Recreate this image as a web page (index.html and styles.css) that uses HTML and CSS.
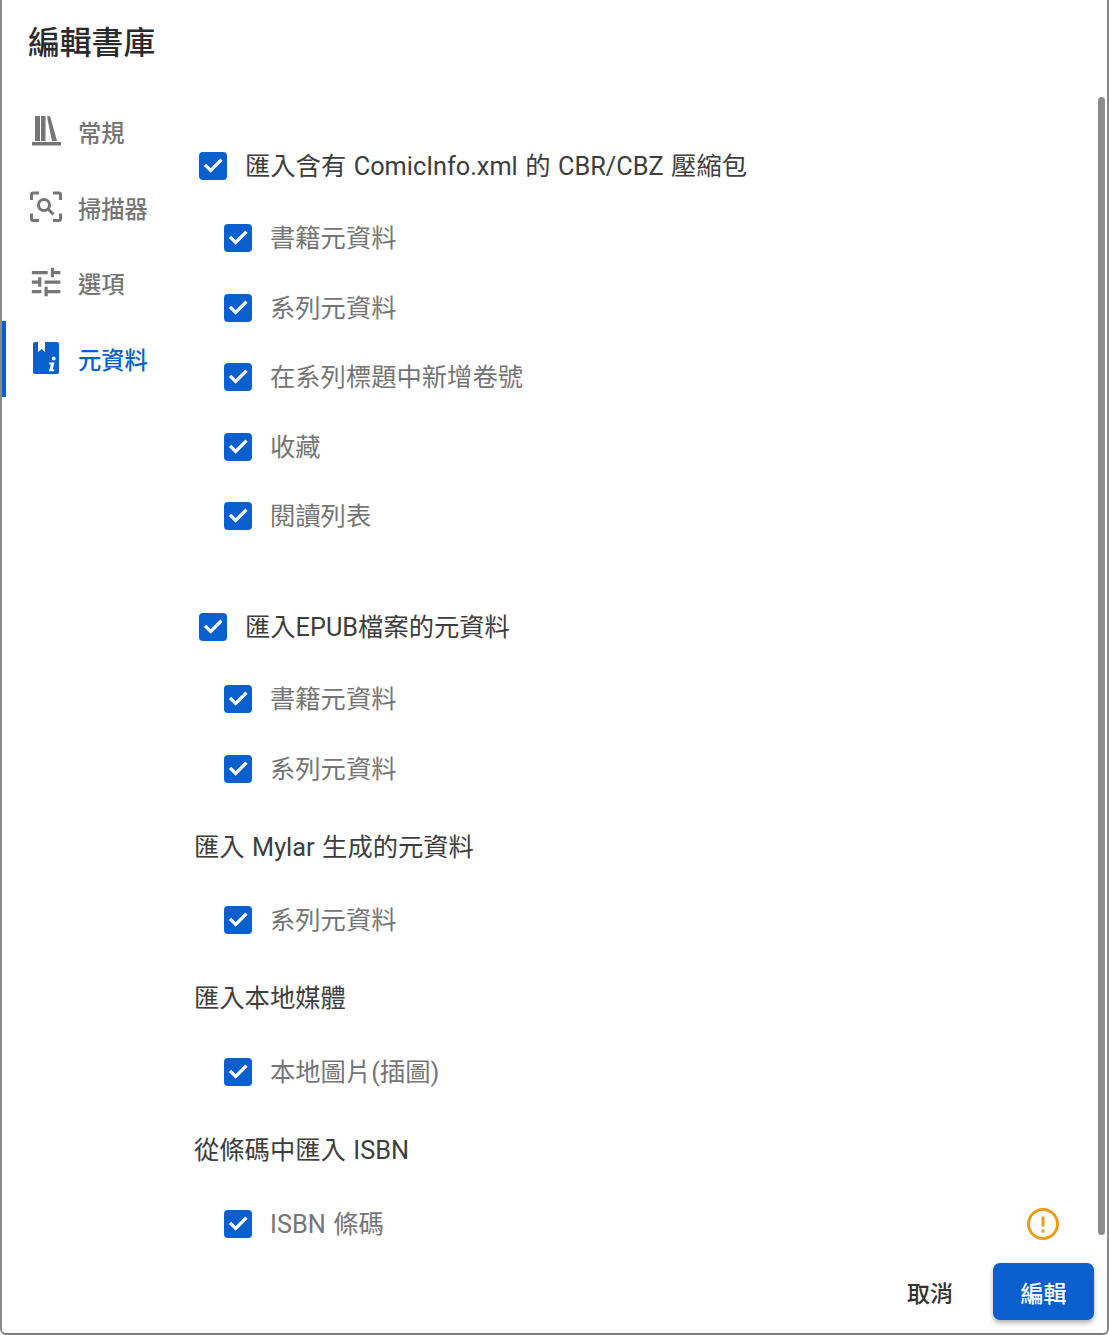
FILE: index.html
```html
<!DOCTYPE html>
<html lang="zh-Hant">
<head>
<meta charset="utf-8">
<title>編輯書庫</title>
<link rel="stylesheet" href="styles.css">
</head>
<body>
<div class="dialog">
  <h1 class="title">編輯書庫</h1>
  <div class="main">
    <nav class="nav">
      <a class="tab">
        <svg class="tab-icon" viewBox="0 0 38 38"><path d="M6 3h5v25H6zM12 3h4.500v25H12zM18 3.500l3-.5 7 25h-5zM3 29h29v3.500H3z"/></svg>
        <span>常規</span>
      </a>
      <a class="tab">
        <svg class="tab-icon" viewBox="0 0 38 38"><path class="line" d="M2.500 11V5.500a1.500 1.500 0 0 1 1.500-1.500h6M24 4h6a1.500 1.500 0 0 1 1.500 1.500V11M31.500 24.500V30a1.500 1.500 0 0 1-1.500 1.500h-6M10 31.500H4A1.500 1.500 0 0 1 2.500 30v-5.500"/><circle class="line" cx="15" cy="16" r="5.500"/><path class="line" d="M19 20l5.500 5.500"/></svg>
        <span>掃描器</span>
      </a>
      <a class="tab">
        <svg class="tab-icon" viewBox="1.200 0.600 24 24"><path d="M3 17v2h6v-2H3zM3 5v2h10V5H3zm10 16v-2h8v-2h-8v-2h-2v6h2zM7 9v2H3v2h4v2h2V9H7zm14 4v-2H11v2h10zm-6-4h2V7h4V5h-4V3h-2v6z"/></svg>
        <span>選項</span>
      </a>
      <a class="tab tab-active">
        <svg class="tab-icon" viewBox="0 0 38 38"><path d="M6 2h3v10l3.500-3 3.500 3V2h12a2 2 0 0 1 2 2v28a2 2 0 0 1-2 2H6a2 2 0 0 1-2-2V4a2 2 0 0 1 2-2z"/><path class="cut" d="M22.800 18.500a1.900 1.900 0 1 1 3.800 0 1.900 1.900 0 0 1-3.800 0zM20.500 22.500h5l-1.800 7h1.800l-.5 1.800h-5l1.800-7h-1.800z"/></svg>
        <span>元資料</span>
      </a>
    </nav>
    <div class="content">
      <section class="group group-first">
        <label class="row"><span class="box"><svg viewBox="0 0 28 28"><path d="M6 12.800l5.700 5.700L22.500 7.600"/></svg></span><span class="parent-label">匯入含有 ComicInfo.xml 的 CBR/CBZ 壓縮包</span></label>
        <div class="children">
          <label class="row"><span class="box"><svg viewBox="0 0 28 28"><path d="M6 12.800l5.700 5.700L22.500 7.600"/></svg></span><span class="child-label">書籍元資料</span></label>
          <label class="row"><span class="box"><svg viewBox="0 0 28 28"><path d="M6 12.800l5.700 5.700L22.500 7.600"/></svg></span><span class="child-label">系列元資料</span></label>
          <label class="row"><span class="box"><svg viewBox="0 0 28 28"><path d="M6 12.800l5.700 5.700L22.500 7.600"/></svg></span><span class="child-label">在系列標題中新增卷號</span></label>
          <label class="row"><span class="box"><svg viewBox="0 0 28 28"><path d="M6 12.800l5.700 5.700L22.500 7.600"/></svg></span><span class="child-label">收藏</span></label>
          <label class="row"><span class="box"><svg viewBox="0 0 28 28"><path d="M6 12.800l5.700 5.700L22.500 7.600"/></svg></span><span class="child-label">閱讀列表</span></label>
        </div>
      </section>
      <section class="group group-epub">
        <label class="row"><span class="box"><svg viewBox="0 0 28 28"><path d="M6 12.800l5.700 5.700L22.500 7.600"/></svg></span><span class="parent-label">匯入EPUB檔案的元資料</span></label>
        <div class="children">
          <label class="row"><span class="box"><svg viewBox="0 0 28 28"><path d="M6 12.800l5.700 5.700L22.500 7.600"/></svg></span><span class="child-label">書籍元資料</span></label>
          <label class="row"><span class="box"><svg viewBox="0 0 28 28"><path d="M6 12.800l5.700 5.700L22.500 7.600"/></svg></span><span class="child-label">系列元資料</span></label>
        </div>
      </section>
      <section class="group group-mylar">
        <div class="heading">匯入 Mylar 生成的元資料</div>
        <div class="children">
          <label class="row"><span class="box"><svg viewBox="0 0 28 28"><path d="M6 12.800l5.700 5.700L22.500 7.600"/></svg></span><span class="child-label">系列元資料</span></label>
        </div>
      </section>
      <section class="group group-head">
        <div class="heading">匯入本地媒體</div>
        <div class="children children-wide">
          <label class="row"><span class="box"><svg viewBox="0 0 28 28"><path d="M6 12.800l5.700 5.700L22.500 7.600"/></svg></span><span class="child-label">本地圖片(插圖)</span></label>
        </div>
      </section>
      <section class="group group-head">
        <div class="heading">從條碼中匯入 ISBN</div>
        <div class="children children-wide">
          <label class="row"><span class="box"><svg viewBox="0 0 28 28"><path d="M6 12.800l5.700 5.700L22.500 7.600"/></svg></span><span class="child-label">ISBN 條碼</span>
            <svg class="warn" viewBox="0 0 34 34"><circle cx="17" cy="17" r="14.500"/><path d="M17 9.500v10M17 22.500v3"/></svg>
          </label>
        </div>
      </section>
    </div>
    <div class="scrollbar"></div>
  </div>
  <footer class="footer">
    <button class="btn btn-text">取消</button>
    <button class="btn btn-primary">編輯</button>
  </footer>
</div>
</body>
</html>
```
FILE: styles.css
```css
* { box-sizing: border-box; }
html, body { margin: 0; height: 100%; background: #fff; }
body { font-family: Roboto, "Noto Sans CJK TC", sans-serif; overflow: hidden; }

.dialog {
  width: 1109px;
  height: 1335px;
  display: flex;
  flex-direction: column;
  background: #fff;
  border-left: 2px solid #8a8a8a;
  border-right: 2px solid #8a8a8a;
  border-bottom: 2px solid #7c7c7c;
  border-radius: 0 0 6px 6px;
}
.title {
  margin: 0;
  height: 95px;
  padding: 20px 0 0 26px;
  font-size: 31.800px;
  line-height: 46px;
  font-weight: 500;
  color: #2b2b2b;
}
.main { flex: 1; display: flex; min-height: 0; }
.nav { width: 193px; flex: none; display: flex; flex-direction: column; margin-top: -1px; }
.tab {
  height: 75.700px;
  display: flex;
  align-items: center;
  gap: 10px;
  padding-left: 24px;
  border-left: 4px solid transparent;
  color: #757575;
  font-size: 23.300px;
  font-weight: 500;
  fill: #757575;
}
.tab-icon { width: 38px; height: 38px; flex: none; margin-left: -1px; margin-right: 1px; }
.tab-icon .line { fill: none; stroke: #757575; stroke-width: 3; }
.tab-icon .cut { fill: #fff; }
.tab-active { color: #0a5fcf; fill: #0a5fcf; border-left-color: #0a5fcf; }

.content { flex: 1; min-width: 0; }
.group-first { padding-top: 51px; }
.group-epub { margin-top: 70.800px; }
.group-mylar { margin-top: 39.600px; }
.group-head { margin-top: 38.200px; }
.row { display: flex; align-items: center; height: 40px; padding-left: 4px; }
.children { display: flex; flex-direction: column; gap: 29.600px; padding-top: 32px; padding-left: 25px; }
.children-wide { padding-top: 33.800px; }
.box {
  width: 28px; height: 28px; flex: none;
  display: block;
  border-radius: 4px;
  background: #0a5fcf;
}
.box svg { display: block; width: 28px; height: 28px; fill: none; stroke: #fff; stroke-width: 3.200px; }
.parent-label, .child-label {
  margin-left: 18px;
  padding-top: 2px;
  font-size: 25.300px;
  word-spacing: 1.200px;
  line-height: 38px;
  white-space: nowrap;
}
.parent-label { color: #3d3d3d; }
.child-label { color: #757575; }
.heading { height: 40px; line-height: 40px; margin-left: -1px; font-size: 25.300px; word-spacing: 1.200px; color: #3d3d3d; white-space: nowrap; }
.warn {
  width: 34px; height: 34px; margin-left: auto; margin-right: 38px; flex: none;
  fill: none; stroke: #f09a1a; stroke-width: 3;
}
.scrollbar {
  flex: none;
  width: 7px;
  margin: 2px 2px 25px 0;
  background: #8c8c8c;
  border-radius: 4px;
}
.footer {
  height: 73px;
  flex: none;
  display: flex;
  justify-content: flex-end;
  align-items: flex-start;
  gap: 21px;
  padding: 3px 13px 0 0;
}
.btn {
  font-family: inherit;
  font-size: 23px;
  font-weight: 500;
  height: 57px;
  border: 0;
  border-radius: 7px;
  cursor: pointer;
  background: none;
}
.btn-text { color: #333; width: 84px; padding: 0; }
.btn-primary { color: #fff; background: #0a5fcf; width: 101px; padding: 0; box-shadow: 0 3px 5px rgba(0,0,0,.3); }
```
